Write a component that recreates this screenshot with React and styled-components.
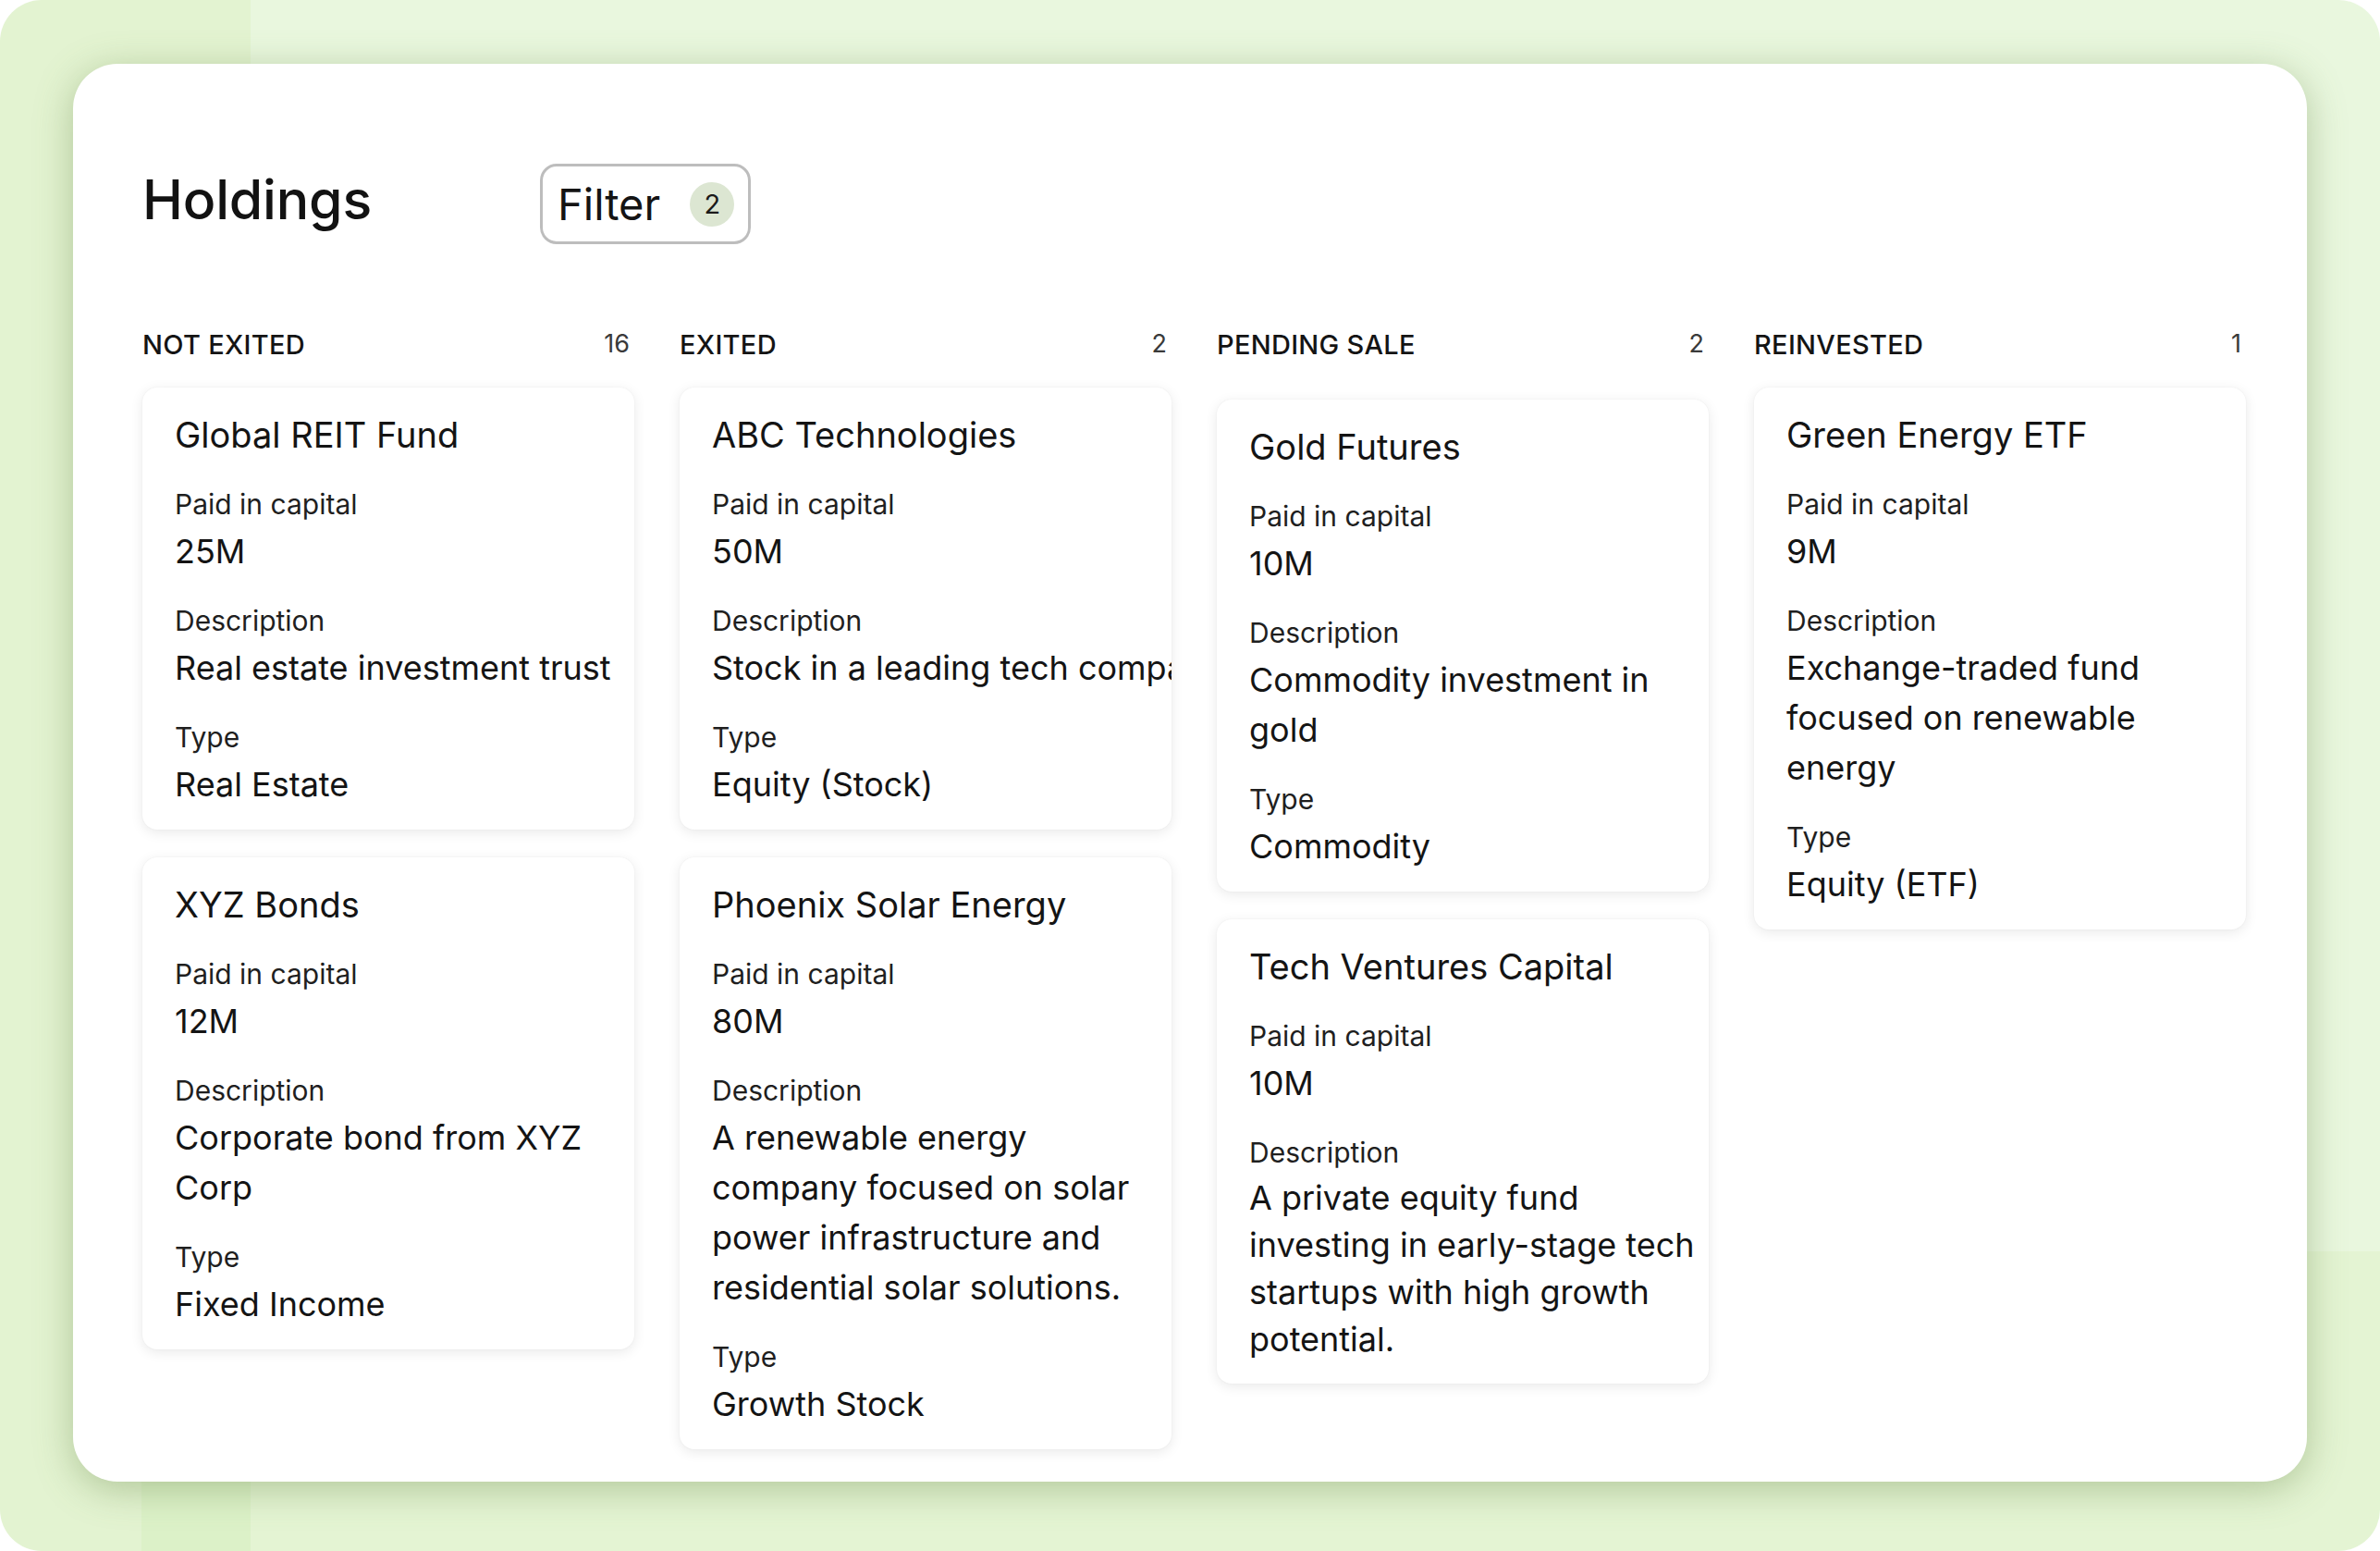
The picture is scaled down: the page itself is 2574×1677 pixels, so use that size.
import React from "react";
import styled, { createGlobalStyle } from "styled-components";

const GlobalStyle = createGlobalStyle`
  html, body {
    margin: 0;
    padding: 0;
    background: #ffffff;
  }
  body {
    font-family: Inter, "Noto Sans", "Liberation Sans", sans-serif;
    color: #141414;
    -webkit-font-smoothing: antialiased;
  }
  * { box-sizing: border-box; }
`;

const Frame = styled.div`
  width: 100%;
  height: 100vh;
  min-height: 1677px;
  display: flex;
  padding: 69px 79px 75px 79px;
  border-radius: 45px;
  background-color: #e9f7de;
  background-image:
    linear-gradient(#dcf1c8, #dcf1c8),
    linear-gradient(#e3f3d1, #e3f3d1),
    linear-gradient(#e4f4d3, #e4f4d3);
  background-size: 118px 75px, 271px 100%, 100% 324px;
  background-position: 153px 100%, 0 0, 0 100%;
  background-repeat: no-repeat;
`;

const Panel = styled.main`
  flex: 1;
  background: #ffffff;
  border-radius: 48px;
  box-shadow: 0 8px 40px rgba(105, 135, 75, 0.42);
  padding: 108px 66px 36px 75px;
  display: flex;
  flex-direction: column;
`;

const Header = styled.header`
  display: flex;
  align-items: center;
  gap: 182px;
`;

const Title = styled.h1`
  margin: 0 0 9px 0;
  font-size: 59px;
  line-height: 72px;
  font-weight: 500;
  letter-spacing: -0.2px;
  color: #121212;
`;

const FilterButton = styled.button`
  display: flex;
  align-items: center;
  gap: 32px;
  height: 87px;
  padding: 0 15px 0 16px;
  border: 3px solid #bdbdbd;
  border-radius: 18px;
  background: #ffffff;
  font-family: inherit;
  font-size: 47px;
  font-weight: 400;
  color: #141414;
  cursor: pointer;
`;

const Badge = styled.span`
  width: 48px;
  height: 48px;
  border-radius: 50%;
  background: #dce6d2;
  display: grid;
  place-items: center;
  font-size: 29px;
  font-weight: 400;
  color: #1a1a1a;
`;

const Board = styled.section`
  margin-top: 91px;
  display: grid;
  grid-template-columns: repeat(4, 532px);
  column-gap: 49px;
  align-items: start;
`;

const Column = styled.div`
  display: flex;
  flex-direction: column;
`;

const ColumnHeader = styled.div`
  display: flex;
  justify-content: space-between;
  align-items: center;
  height: 35px;
  padding-right: 5px;
`;

const ColumnName = styled.span`
  font-size: 29px;
  font-weight: 500;
  letter-spacing: 0.3px;
  text-transform: uppercase;
  color: #141414;
`;

const ColumnCount = styled.span`
  font-size: 27px;
  font-weight: 400;
  color: #3a3a3a;
  margin-top: -3px;
`;

const CardList = styled.div`
  display: flex;
  flex-direction: column;
  gap: 30px;
  margin-top: ${(p) => 29 + (p.$offset || 0)}px;
`;

const Card = styled.article`
  background: #ffffff;
  border-radius: 16px;
  box-shadow: 0 3px 14px rgba(0, 0, 0, 0.09), 0 0 2px rgba(0, 0, 0, 0.05);
  padding: 26px 20px 22px 35px;
  overflow: hidden;
  display: flex;
  flex-direction: column;
`;

const CardTitle = styled.h3`
  margin: 0 0 32px 0;
  font-size: 38px;
  line-height: 50px;
  font-weight: 400;
  color: #141414;
  white-space: nowrap;
`;

const Fields = styled.dl`
  margin: 0;
  display: flex;
  flex-direction: column;
  gap: 30px;
`;

const Field = styled.div`
  display: flex;
  flex-direction: column;
  gap: 6px;
`;

const Label = styled.dt`
  font-size: 30px;
  line-height: 36px;
  font-weight: 400;
  color: #1f1f1f;
`;

const Value = styled.dd`
  margin: 0;
  font-size: 36px;
  line-height: ${(p) => (p.$compact ? 51 : 54)}px;
  font-weight: 400;
  color: #141414;
  white-space: pre;
`;

const columns = [
  {
    name: "Not exited",
    count: 16,
    cards: [
      {
        title: "Global REIT Fund",
        capital: "25M",
        description: "Real estate investment trust",
        type: "Real Estate",
      },
      {
        title: "XYZ Bonds",
        capital: "12M",
        description: "Corporate bond from XYZ\nCorp",
        type: "Fixed Income",
      },
    ],
  },
  {
    name: "Exited",
    count: 2,
    cards: [
      {
        title: "ABC Technologies",
        capital: "50M",
        description: "Stock in a leading tech company",
        type: "Equity (Stock)",
      },
      {
        title: "Phoenix Solar Energy",
        capital: "80M",
        description:
          "A renewable energy\ncompany focused on solar\npower infrastructure and\nresidential solar solutions.",
        type: "Growth Stock",
      },
    ],
  },
  {
    name: "Pending sale",
    count: 2,
    offset: 13,
    cards: [
      {
        title: "Gold Futures",
        capital: "10M",
        description: "Commodity investment in\ngold",
        type: "Commodity",
      },
      {
        title: "Tech Ventures Capital",
        capital: "10M",
        description:
          "A private equity fund\ninvesting in early-stage tech\nstartups with high growth\npotential.",
        compact: true,
      },
    ],
  },
  {
    name: "Reinvested",
    count: 1,
    cards: [
      {
        title: "Green Energy ETF",
        capital: "9M",
        description: "Exchange-traded fund\nfocused on renewable\nenergy",
        type: "Equity (ETF)",
      },
    ],
  },
];

function HoldingCard({ card }) {
  return (
    <Card>
      <CardTitle>{card.title}</CardTitle>
      <Fields>
        <Field>
          <Label>Paid in capital</Label>
          <Value>{card.capital}</Value>
        </Field>
        <Field>
          <Label>Description</Label>
          <Value $compact={card.compact}>{card.description}</Value>
        </Field>
        {card.type && (
          <Field>
            <Label>Type</Label>
            <Value>{card.type}</Value>
          </Field>
        )}
      </Fields>
    </Card>
  );
}

export default function App() {
  return (
    <>
      <GlobalStyle />
      <Frame>
        <Panel>
          <Header>
            <Title>Holdings</Title>
            <FilterButton type="button">
              Filter
              <Badge>2</Badge>
            </FilterButton>
          </Header>
          <Board>
            {columns.map((col) => (
              <Column key={col.name}>
                <ColumnHeader>
                  <ColumnName>{col.name}</ColumnName>
                  <ColumnCount>{col.count}</ColumnCount>
                </ColumnHeader>
                <CardList $offset={col.offset}>
                  {col.cards.map((card) => (
                    <HoldingCard key={card.title} card={card} />
                  ))}
                </CardList>
              </Column>
            ))}
          </Board>
        </Panel>
      </Frame>
    </>
  );
}
